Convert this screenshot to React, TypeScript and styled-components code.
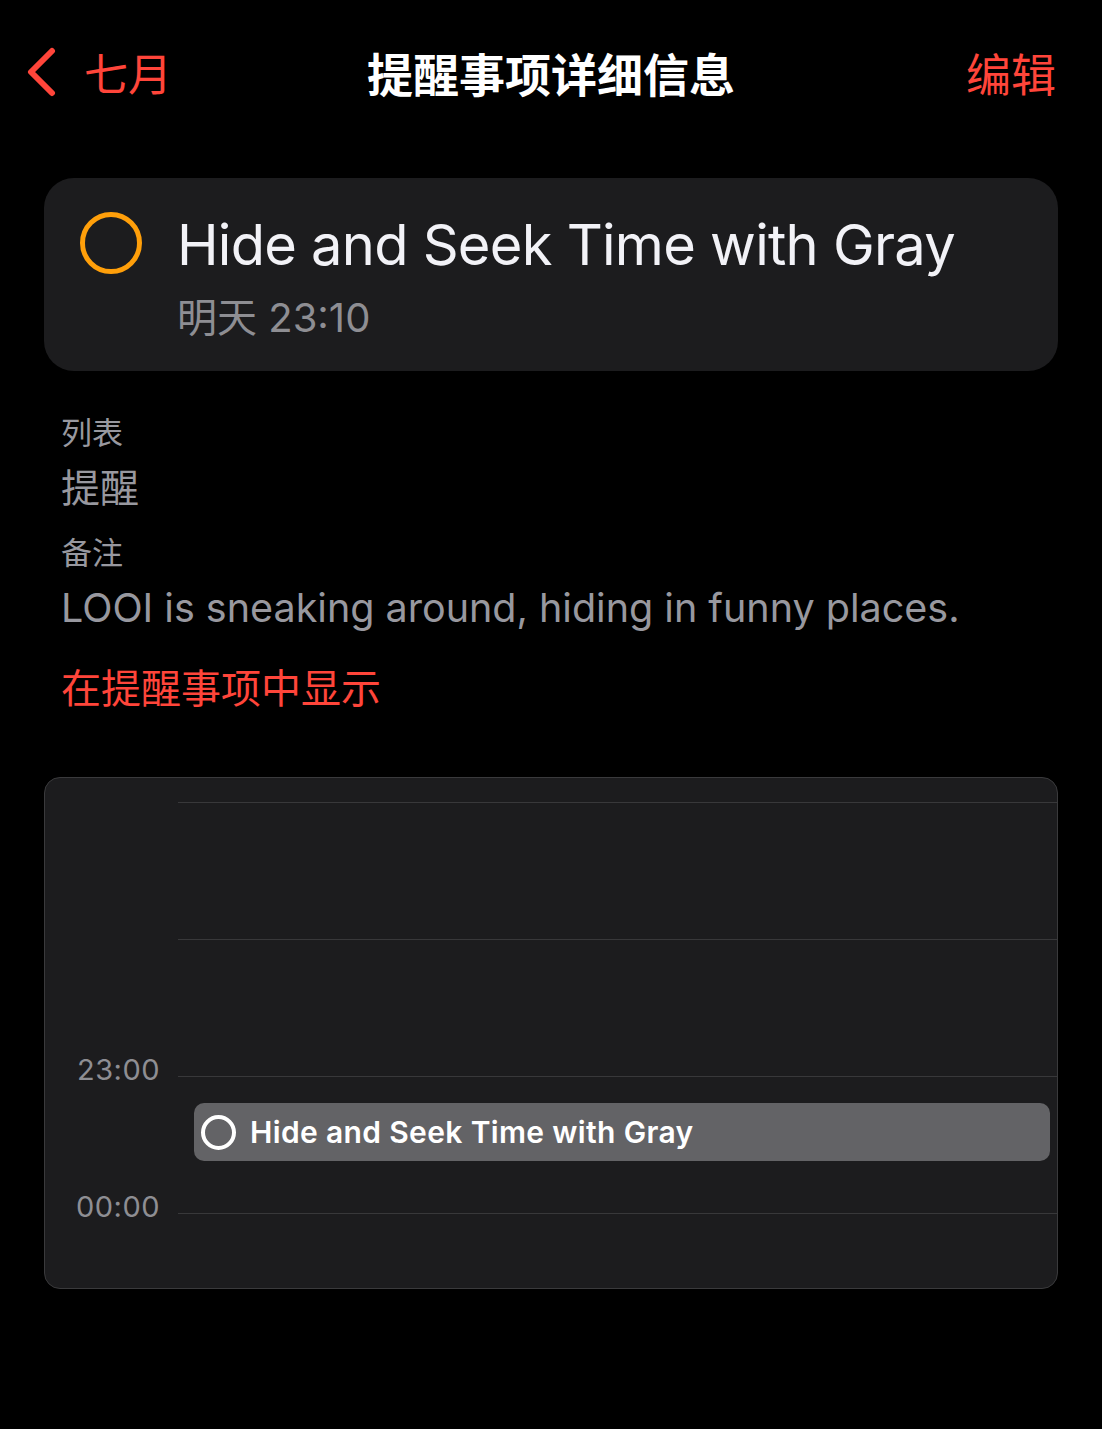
import React from 'react'
import styled, { createGlobalStyle } from 'styled-components'

const GlobalStyle = createGlobalStyle`
  html, body {
    margin: 0;
    padding: 0;
    background: #000;
  }
  body {
    font-family: Inter, 'Noto Sans CJK SC', sans-serif;
    -webkit-font-smoothing: antialiased;
  }
`

const Page = styled.div`
  width: 1102px;
  min-height: 1429px;
  background: #000;
  color: #fff;
  box-sizing: border-box;
`

const NavBar = styled.div`
  display: grid;
  grid-template-columns: 1fr auto 1fr;
  align-items: center;
  height: 150px;
  padding: 0 24px 6px;
  box-sizing: border-box;
`

const BackButton = styled.div`
  display: flex;
  align-items: center;
  gap: 26px;
  color: #ff453a;
  font-size: 44px;
`

const NavTitle = styled.div`
  font-size: 46px;
  font-weight: 600;
  color: #fff;
`

const EditButton = styled.div`
  justify-self: end;
  margin-right: 22px;
  color: #ff453a;
  font-size: 45px;
`

const Content = styled.div`
  padding: 28px 44px 0;
`

const ReminderCard = styled.div`
  display: flex;
  gap: 35px;
  background: #1c1c1e;
  border-radius: 30px;
  padding: 34px 36px 30px;
  height: 193px;
  box-sizing: border-box;
`

const Ring = styled.div<{ $color: string; $size: number; $stroke: number }>`
  width: ${p => p.$size}px;
  height: ${p => p.$size}px;
  border: ${p => p.$stroke}px solid ${p => p.$color};
  border-radius: 50%;
  box-sizing: border-box;
  flex-shrink: 0;
`

const CardText = styled.div`
  display: flex;
  flex-direction: column;
  margin-top: -6px;
`

const CardTitle = styled.div`
  font-size: 56px;
  line-height: 78px;
  letter-spacing: -0.75px;
  color: #f2f2f7;
`

const CardSub = styled.div`
  font-size: 40px;
  line-height: 50px;
  color: #8e8e93;
  margin-top: 9px;
`

const Details = styled.div`
  padding: 40px 17px 0;
  display: flex;
  flex-direction: column;
`

const Label = styled.div<{ $top?: number }>`
  font-size: 31px;
  line-height: 44px;
  color: #98989f;
  margin-top: ${p => p.$top || 0}px;
`

const Value = styled.div`
  font-size: 39px;
  line-height: 56px;
  color: #98989f;
  margin-top: 5px;
`

const Note = styled.div`
  font-size: 39.5px;
  line-height: 64px;
  color: #98989f;
  margin-top: 1px;
`

const ShowLink = styled.div`
  font-size: 40px;
  line-height: 56px;
  color: #ff453a;
  margin-top: 21px;
`

const Timeline = styled.div`
  margin-top: 60px;
  background: #1c1c1e;
  border: 1px solid #3a3a3c;
  border-radius: 16px;
  height: 512px;
  box-sizing: border-box;
  padding-top: 24px;
  display: flex;
  flex-direction: column;
  overflow: hidden;
`

const HourRow = styled.div`
  display: flex;
  height: 137px;
  flex-shrink: 0;
  position: relative;

  &:last-child {
    height: 74px;
  }
`

const HourLabel = styled.div`
  width: 133px;
  flex-shrink: 0;
  font-size: 29px;
  color: #8e8e93;
  text-align: right;
  padding-right: 18px;
  box-sizing: border-box;
  line-height: 0;
  letter-spacing: 0.5px;
  margin-top: -6px;
`

const HourLine = styled.div`
  flex: 1;
  border-top: 1.5px solid #38383a;
  position: relative;
`

const EventBlock = styled.div`
  position: absolute;
  left: 16px;
  right: 7px;
  top: 26px;
  height: 58px;
  border-radius: 10px;
  background: #636366;
  display: flex;
  align-items: center;
  gap: 14px;
  padding-left: 7px;
  box-sizing: border-box;
`

const EventTitle = styled.div`
  font-size: 30px;
  font-weight: 600;
  color: #fff;
  letter-spacing: 0.35px;
`

export default function App() {
  const hours = ['', '', '23:00', '00:00']
  return (
    <Page>
      <GlobalStyle />
      <NavBar>
        <BackButton>
          <svg width="34" height="50" viewBox="0 0 34 50">
            <path d="M28 4 L7 25 L28 46" fill="none" stroke="#ff453a" strokeWidth="6" strokeLinecap="round" strokeLinejoin="round" />
          </svg>
          <span>七月</span>
        </BackButton>
        <NavTitle>提醒事项详细信息</NavTitle>
        <EditButton>编辑</EditButton>
      </NavBar>
      <Content>
        <ReminderCard>
          <Ring $color="#ff9f0a" $size={62} $stroke={5} />
          <CardText>
            <CardTitle>Hide and Seek Time with Gray</CardTitle>
            <CardSub>明天 23:10</CardSub>
          </CardText>
        </ReminderCard>
        <Details>
          <Label>列表</Label>
          <Value>提醒</Value>
          <Label $top={15}>备注</Label>
          <Note>LOOI is sneaking around, hiding in funny places.</Note>
          <ShowLink>在提醒事项中显示</ShowLink>
        </Details>
        <Timeline>
          {hours.map((h, i) => (
            <HourRow key={i}>
              <HourLabel>{h}</HourLabel>
              <HourLine>
                {h === '23:00' && (
                  <EventBlock>
                    <Ring $color="#fff" $size={35} $stroke={4} />
                    <EventTitle>Hide and Seek Time with Gray</EventTitle>
                  </EventBlock>
                )}
              </HourLine>
            </HourRow>
          ))}
        </Timeline>
      </Content>
    </Page>
  )
}
